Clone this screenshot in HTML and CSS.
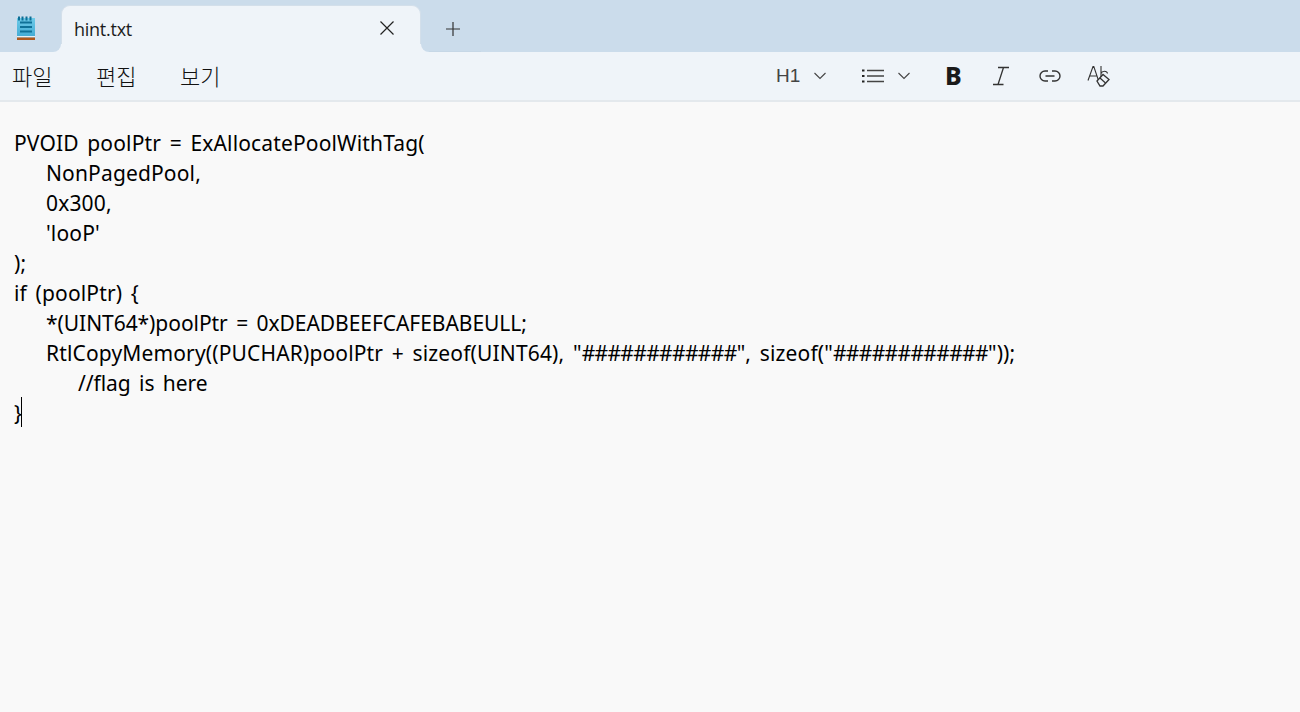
FILE: index.html
```html
<!DOCTYPE html>
<html lang="ko">
<head>
<meta charset="utf-8">
<title>hint.txt</title>
<link rel="stylesheet" href="styles.css">
</head>
<body>
<div class="app">
  <header class="titlebar">
    <div class="app-icon">
      <svg width="24" height="26" viewBox="0 0 24 26">
        <defs><linearGradient id="nb" x1="0" y1="0" x2="0" y2="1"><stop offset="0" stop-color="#6fcbe8"/><stop offset="1" stop-color="#3fa9d3"/></linearGradient></defs>
        <rect x="4" y="4" width="18" height="20" fill="url(#nb)"/>
        <path d="M6 2.500v4M9.500 2.500v4M13.500 2.500v4M17.500 2.500v4" stroke="#0e6f96" stroke-width="2"/>
        <path d="M7 8.500h12M7 13h12M7 17.500h12" stroke="#0f7197" stroke-width="2"/>
        <rect x="4" y="22" width="18" height="1.600" fill="#e8eef2"/>
        <rect x="4" y="23.500" width="18" height="2.500" fill="#b0591c"/>
      </svg>
    </div>
    <div class="tab">
      <span class="tab-name">hint.txt</span>
      <svg class="tab-close" width="16" height="16" viewBox="0 0 16 16"><path d="M1.500 1.500l13 13M14.500 1.500l-13 13" stroke="#222" stroke-width="1.200" fill="none"/></svg>
    </div>
    <div class="newtab">
      <svg width="16" height="16" viewBox="0 0 16 16"><path d="M8 1v14M1 8h14" stroke="#333" stroke-width="1.200" fill="none"/></svg>
    </div>
  </header>
  <nav class="menubar">
    <div class="menus"><span>파일</span><span>편집</span><span>보기</span></div>
    <div class="tools">
      <div class="tool tool-h"><span class="h1">H1</span>
        <svg width="14" height="8" viewBox="0 0 14 8"><path d="M1.500 1l5.500 5.500L12.500 1" stroke="#444" stroke-width="1.100" fill="none"/></svg>
      </div>
      <div class="tool tool-list">
        <svg width="22" height="14" viewBox="0 0 22 14"><path d="M5 1.500h17M5 7h17M5 12.500h17" stroke="#444" stroke-width="1.300"/><path d="M0 1.500h2.500M0 7h2.500M0 12.500h2.500" stroke="#222" stroke-width="2.200"/></svg>
        <svg width="14" height="8" viewBox="0 0 14 8"><path d="M1.500 1l5.500 5.500L12.500 1" stroke="#444" stroke-width="1.100" fill="none"/></svg>
      </div>
      <div class="tool tool-b"><span class="bold">B</span></div>
      <div class="tool tool-i">
        <svg width="18" height="20" viewBox="0 0 18 20"><path d="M6 1.500h11M11.500 1.500L6 18.500M1 18.500h10.500" stroke="#333" stroke-width="1.300" fill="none"/></svg>
      </div>
      <div class="tool tool-link">
        <svg width="22" height="12" viewBox="0 0 22 12"><path d="M9 1H6a5 5 0 0 0 0 10h3M13 1h3a5 5 0 0 1 0 10h-3M6.500 6h9" stroke="#333" stroke-width="1.400" fill="none"/></svg>
      </div>
      <div class="tool tool-clear">
        <svg width="24" height="23" viewBox="0 0 24 23"><path d="M1 15.500L6 1.500h.8L11.500 15.500M2.800 11h7M14 1v13M14 8.500c1-3 6-3 6.500 0" stroke="#333" stroke-width="1.100" fill="none"/><path d="M10 16l6-6.500 6 5-6 6.500h-3z" fill="#eff4f9" stroke="#333" stroke-width="1.300"/><path d="M13 13l5.500 5" stroke="#333" stroke-width="1.200"/></svg>
      </div>
    </div>
  </nav>
  <main class="editor">
<pre class="code"><span class="l0">PVOID poolPtr = ExAllocatePoolWithTag(</span>
<span class="l1">NonPagedPool,</span>
<span class="l1">0x300,</span>
<span class="l1">'looP'</span>
<span class="l0">);</span>
<span class="l0">if (poolPtr) {</span>
<span class="l1 tight">*(UINT64*)poolPtr = 0xDEADBEEFCAFEBABEULL;</span>
<span class="l1">RtlCopyMemory((PUCHAR)poolPtr + sizeof(UINT64), "<span class="hash">############</span>", sizeof("<span class="hash">############</span>"));</span>
<span class="l2 tight">//flag is here</span>
<span class="l0">}<i class="caret"></i></span></pre>
  </main>
</div>
</body>
</html>
```
FILE: styles.css
```css
* { box-sizing: border-box; }
html, body { margin: 0; height: 100%; overflow: hidden; }
body { font-family: "Noto Sans CJK KR", "Noto Sans", sans-serif; background: #f9f9f9; color: #111; }
.app { display: flex; flex-direction: column; height: 712px; }

.titlebar { height: 52px; background: #cbdceb; display: flex; align-items: flex-end; flex: none; }
.app-icon { width: 61px; height: 52px; display: flex; padding: 14px 0 0 13px; flex: none; }
.tab {
  width: 360px; height: 47px; background: #eff4f9; flex: none;
  border-radius: 9px 9px 0 0;
  border: 1px solid #d3dfea; border-bottom: none;
  display: flex; align-items: center; justify-content: space-between;
  padding: 0 25px 0 12px; position: relative;
}
.tab::before, .tab::after {
  content: ""; position: absolute; bottom: 0; width: 8px; height: 8px; background: #cbdceb;
}
.tab::before { left: -9px; border-bottom-right-radius: 8px; box-shadow: 3px 3px 0 3px #eff4f9; clip-path: inset(0 -2px -2px 0); }
.tab::after { right: -9px; border-bottom-left-radius: 8px; box-shadow: -3px 3px 0 3px #eff4f9; clip-path: inset(0 0 -2px -2px); }
.tab-name { font-family: "Open Sans", sans-serif; font-size: 18px; color: #1c1c1c; letter-spacing: -0.25px; }
.tab-close { margin-top: -3px; }
.newtab { width: 60px; height: 47px; display: flex; align-items: center; justify-content: center; padding-left: 4px; padding-top: 1px; border-bottom: 1px solid #c6d7e6; }

.menubar { height: 50px; flex: none; background: #eff4f9; border-bottom: 2px solid #e4e9ed; display: flex; align-items: center; font-size: 22px; }
.menus { display: flex; gap: 43.5px; padding-left: 12px; width: 776px; color: #111; margin-top: -3px; font-weight: 300; }
.menus span { line-height: 1; }
.tools { display: flex; align-items: center; height: 100%; }
.tool { display: flex; align-items: center; }
.tool-h { width: 85px; gap: 13px; }
.h1 { font-family: "Liberation Sans", sans-serif; font-size: 19px; color: #444; }
.tool-list { width: 83px; gap: 13px; padding-left: 1px; }
.tool-b { width: 48px; padding-left: 1px; margin-top: -1px; }
.bold { font-family: "Noto Sans", sans-serif; font-weight: 800; font-size: 25px; color: #1a1a1a; line-height: 1; }
.tool-i { width: 47px; }
.tool-link { width: 48px; }

.editor { flex: 1; background: #f9f9f9; padding: 26px 0 0 14px; }
.code { margin: 0; font-family: "Noto Sans", sans-serif; font-size: 21px; line-height: 30px; color: #000; word-spacing: 3px; letter-spacing: 0.15px; }
.hash { letter-spacing: -0.65px; }
.tight { letter-spacing: -0.05px; }
.l1 { padding-left: 32px; }
.l2 { padding-left: 64px; }
.caret { display: inline-block; width: 1px; height: 30px; background: #000; vertical-align: top; margin: -1px 0 0 -1px; }
```
